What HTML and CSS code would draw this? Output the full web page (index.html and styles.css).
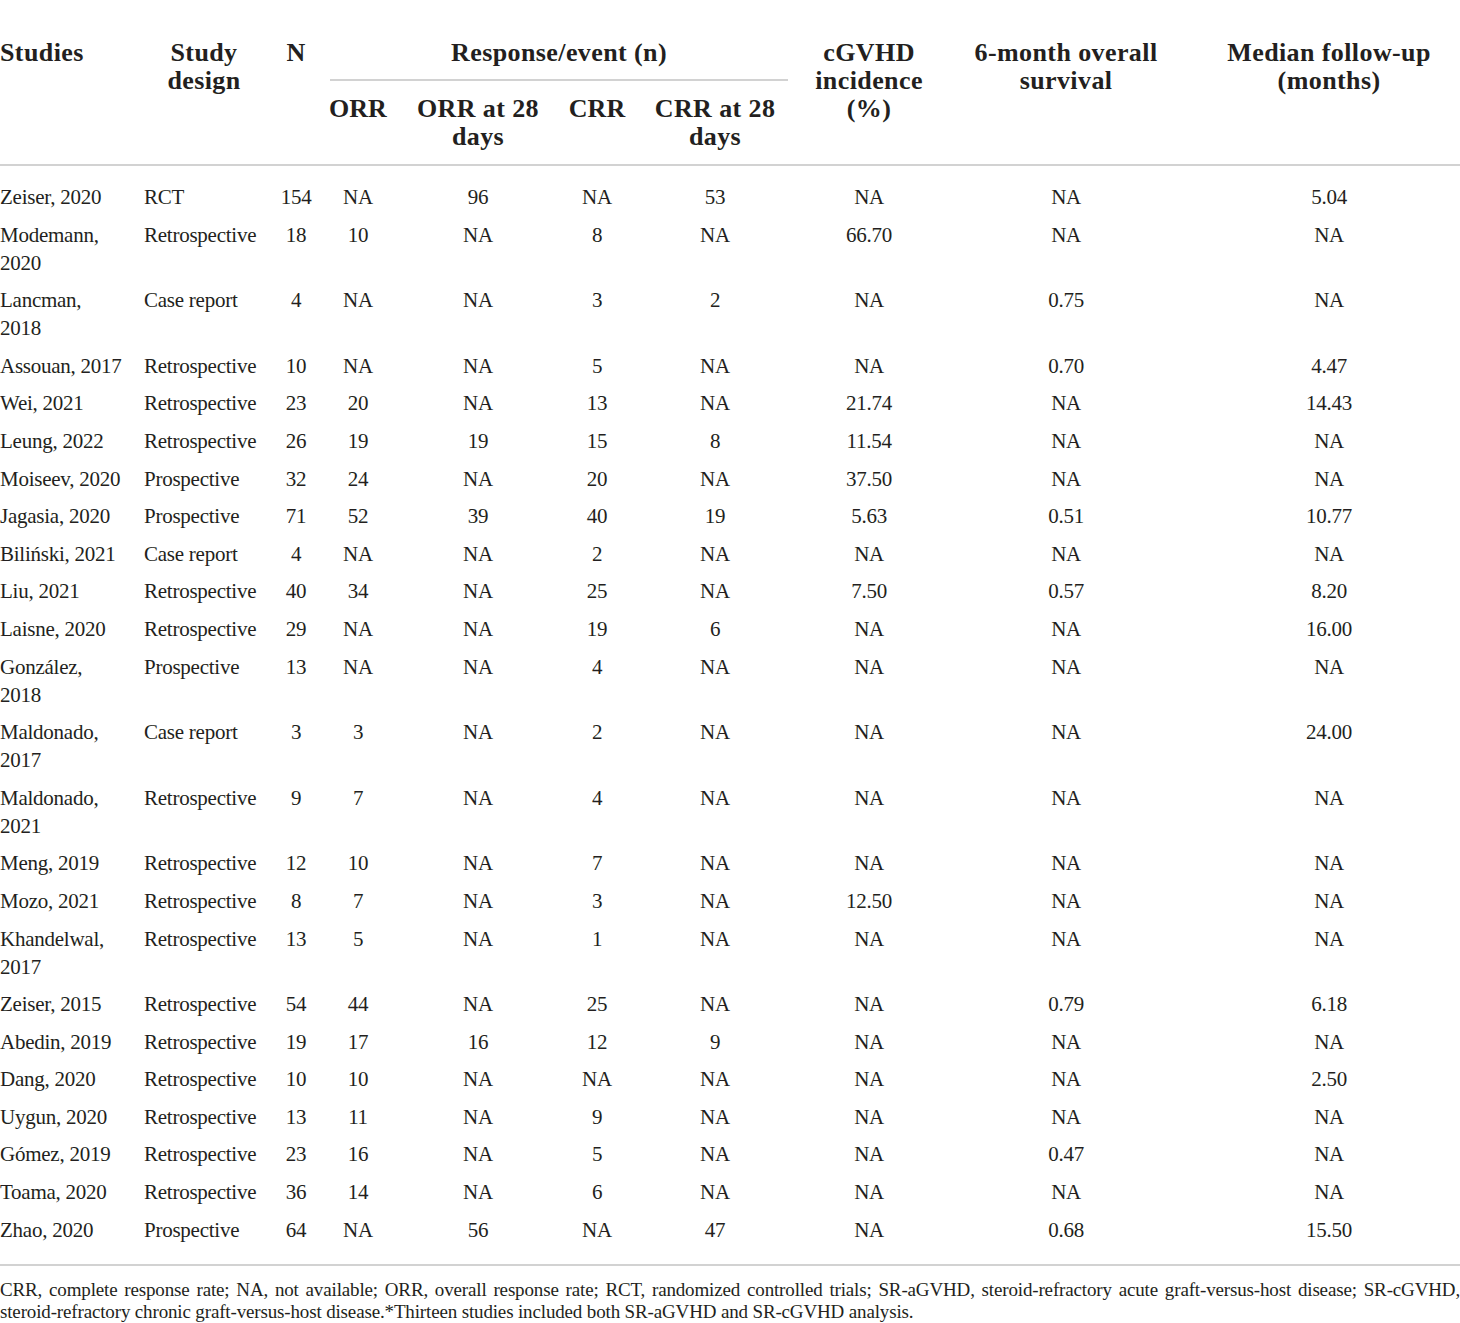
FILE: index.html
```
<!DOCTYPE html>
<html lang="en">
<head>
    <meta charset="UTF-8">
    <meta name="viewport" content="width=device-width, initial-scale=1.0">
    <title>SR-GVHD studies</title>
    <link rel="stylesheet" href="styles.css">
</head>
<body>
    <div class="table-wrap">
        <table class="studies">
            <colgroup>
                <col class="c-study">
                <col class="c-design">
                <col class="c-n">
                <col class="c-orr">
                <col class="c-orr28">
                <col class="c-crr">
                <col class="c-crr28">
                <col class="c-cgvhd">
                <col class="c-os">
                <col class="c-fu">
            </colgroup>
            <thead>
                <tr>
                    <th rowspan="2" class="left">Studies</th>
                    <th rowspan="2">Study design</th>
                    <th rowspan="2">N</th>
                    <th colspan="4" class="span"><div class="span-label">Response/event (n)</div></th>
                    <th rowspan="2">cGVHD incidence (%)</th>
                    <th rowspan="2">6-month overall survival</th>
                    <th rowspan="2">Median follow-up (months)</th>
                </tr>
                <tr class="sub">
                    <th class="tight">ORR</th>
                    <th>ORR at 28 days</th>
                    <th class="tight">CRR</th>
                    <th>CRR at 28 days</th>
                </tr>
            </thead>
            <tbody>
                <tr><td>Zeiser, 2020</td><td>RCT</td><td>154</td><td>NA</td><td>96</td><td>NA</td><td>53</td><td>NA</td><td>NA</td><td>5.04</td></tr>
                <tr><td>Modemann, 2020</td><td>Retrospective</td><td>18</td><td>10</td><td>NA</td><td>8</td><td>NA</td><td>66.70</td><td>NA</td><td>NA</td></tr>
                <tr><td>Lancman, 2018</td><td>Case report</td><td>4</td><td>NA</td><td>NA</td><td>3</td><td>2</td><td>NA</td><td>0.75</td><td>NA</td></tr>
                <tr><td>Assouan, 2017</td><td>Retrospective</td><td>10</td><td>NA</td><td>NA</td><td>5</td><td>NA</td><td>NA</td><td>0.70</td><td>4.47</td></tr>
                <tr><td>Wei, 2021</td><td>Retrospective</td><td>23</td><td>20</td><td>NA</td><td>13</td><td>NA</td><td>21.74</td><td>NA</td><td>14.43</td></tr>
                <tr><td>Leung, 2022</td><td>Retrospective</td><td>26</td><td>19</td><td>19</td><td>15</td><td>8</td><td>11.54</td><td>NA</td><td>NA</td></tr>
                <tr><td>Moiseev, 2020</td><td>Prospective</td><td>32</td><td>24</td><td>NA</td><td>20</td><td>NA</td><td>37.50</td><td>NA</td><td>NA</td></tr>
                <tr><td>Jagasia, 2020</td><td>Prospective</td><td>71</td><td>52</td><td>39</td><td>40</td><td>19</td><td>5.63</td><td>0.51</td><td>10.77</td></tr>
                <tr><td>Biliński, 2021</td><td>Case report</td><td>4</td><td>NA</td><td>NA</td><td>2</td><td>NA</td><td>NA</td><td>NA</td><td>NA</td></tr>
                <tr><td>Liu, 2021</td><td>Retrospective</td><td>40</td><td>34</td><td>NA</td><td>25</td><td>NA</td><td>7.50</td><td>0.57</td><td>8.20</td></tr>
                <tr><td>Laisne, 2020</td><td>Retrospective</td><td>29</td><td>NA</td><td>NA</td><td>19</td><td>6</td><td>NA</td><td>NA</td><td>16.00</td></tr>
                <tr><td>González, 2018</td><td>Prospective</td><td>13</td><td>NA</td><td>NA</td><td>4</td><td>NA</td><td>NA</td><td>NA</td><td>NA</td></tr>
                <tr><td>Maldonado, 2017</td><td>Case report</td><td>3</td><td>3</td><td>NA</td><td>2</td><td>NA</td><td>NA</td><td>NA</td><td>24.00</td></tr>
                <tr><td>Maldonado, 2021</td><td>Retrospective</td><td>9</td><td>7</td><td>NA</td><td>4</td><td>NA</td><td>NA</td><td>NA</td><td>NA</td></tr>
                <tr><td>Meng, 2019</td><td>Retrospective</td><td>12</td><td>10</td><td>NA</td><td>7</td><td>NA</td><td>NA</td><td>NA</td><td>NA</td></tr>
                <tr><td>Mozo, 2021</td><td>Retrospective</td><td>8</td><td>7</td><td>NA</td><td>3</td><td>NA</td><td>12.50</td><td>NA</td><td>NA</td></tr>
                <tr><td>Khandelwal, 2017</td><td>Retrospective</td><td>13</td><td>5</td><td>NA</td><td>1</td><td>NA</td><td>NA</td><td>NA</td><td>NA</td></tr>
                <tr><td>Zeiser, 2015</td><td>Retrospective</td><td>54</td><td>44</td><td>NA</td><td>25</td><td>NA</td><td>NA</td><td>0.79</td><td>6.18</td></tr>
                <tr><td>Abedin, 2019</td><td>Retrospective</td><td>19</td><td>17</td><td>16</td><td>12</td><td>9</td><td>NA</td><td>NA</td><td>NA</td></tr>
                <tr><td>Dang, 2020</td><td>Retrospective</td><td>10</td><td>10</td><td>NA</td><td>NA</td><td>NA</td><td>NA</td><td>NA</td><td>2.50</td></tr>
                <tr><td>Uygun, 2020</td><td>Retrospective</td><td>13</td><td>11</td><td>NA</td><td>9</td><td>NA</td><td>NA</td><td>NA</td><td>NA</td></tr>
                <tr><td>Gómez, 2019</td><td>Retrospective</td><td>23</td><td>16</td><td>NA</td><td>5</td><td>NA</td><td>NA</td><td>0.47</td><td>NA</td></tr>
                <tr><td>Toama, 2020</td><td>Retrospective</td><td>36</td><td>14</td><td>NA</td><td>6</td><td>NA</td><td>NA</td><td>NA</td><td>NA</td></tr>
                <tr><td>Zhao, 2020</td><td>Prospective</td><td>64</td><td>NA</td><td>56</td><td>NA</td><td>47</td><td>NA</td><td>0.68</td><td>15.50</td></tr>
            </tbody>
        </table>
        <p class="footnote">CRR, complete response rate; NA, not available; ORR, overall response rate; RCT, randomized controlled trials; SR-aGVHD, steroid-refractory acute graft-versus-host disease; SR-cGVHD, steroid-refractory chronic graft-versus-host disease.*Thirteen studies included both SR-aGVHD and SR-cGVHD analysis.</p>
    </div>
</body>
</html>
```

FILE: styles.css
```
body {
    margin: 0;
    background: #ffffff;
    color: #231f20;
    font-family: "Liberation Serif", "Times New Roman", serif;
}
.table-wrap {
    width: 1460px;
    padding-top: 30px;
}
.studies {
    width: 1460px;
    table-layout: fixed;
    border-collapse: collapse;
}
.c-study { width: 144px; }
.c-design { width: 120px; }
.c-n { width: 64px; }
.c-orr { width: 60px; }
.c-orr28 { width: 180px; }
.c-crr { width: 58px; }
.c-crr28 { width: 178px; }
.c-cgvhd { width: 130px; }
.c-os { width: 264px; }
.c-fu { width: 262px; }

/* header */
.studies thead {
    border-bottom: 2px solid #d2d2d2;
}
.studies th {
    font-size: 26px;
    line-height: 28px;
    font-weight: bold;
    letter-spacing: 0.4px;
    text-align: center;
    vertical-align: top;
    padding: 9px 8px 13px;
}
.studies th.left {
    text-align: left;
    padding-left: 0;
}
.studies th:nth-child(2) {
    padding-left: 0;
    padding-right: 0;
}
.studies th.span {
    padding: 9px 0 0;
}
.span-label {
    margin: 0 16px 0 2px;
    padding-bottom: 12px;
    border-bottom: 2px solid #d2d2d2;
}
.studies .sub th {
    padding-top: 14px;
}
.studies .sub th.tight {
    padding-left: 0;
    padding-right: 0;
    letter-spacing: 0;
}

/* body */
.studies tbody {
    border-bottom: 2px solid #d2d2d2;
}
.studies td {
    font-size: 21px;
    line-height: 28px;
    letter-spacing: -0.25px;
    text-align: center;
    vertical-align: top;
    padding: 4.8px 6px;
}
.studies td:first-child {
    text-align: left;
    padding-left: 0;
    padding-right: 19px;
}
.studies td:nth-child(2) {
    text-align: left;
    padding-left: 0;
    padding-right: 0;
}
.studies tbody tr:first-child td {
    padding-top: 17px;
}
.studies tbody tr:last-child td {
    padding-bottom: 20px;
}

.footnote {
    margin: 0;
    padding-top: 13px;
    font-size: 19px;
    line-height: 22px;
    letter-spacing: -0.15px;
    text-align: justify;
}
```
